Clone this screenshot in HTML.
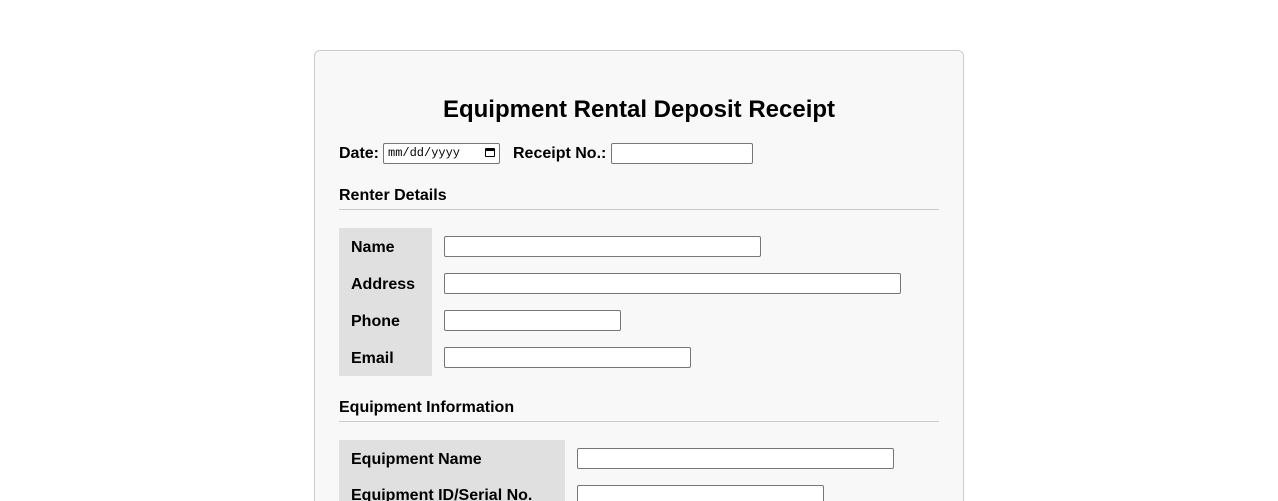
<!DOCTYPE html>
<html style="height:501px;overflow:hidden"><head><style>
body{margin:0;background:#fff;font-family:"Liberation Sans",Arial,sans-serif;width:1278px;height:501px;overflow:hidden;position:relative}
.card{position:absolute;left:314px;top:50px;width:648px;height:480px;border:1px solid #ccc;border-radius:6px;background:#f8f8f8}
.a{position:absolute;font-weight:bold;color:#000;white-space:nowrap}
.in{position:absolute;height:19px;border:1px solid #767676;border-radius:2px;background:#fff}
.lab{position:absolute;background:#e0e0e0}
.line{position:absolute;left:339px;width:600px;height:1px;background:#ccc}
</style></head><body>
<div class="card"></div>
<div class="a" style="left:339px;width:600px;text-align:center;top:96px;font-size:24px">Equipment Rental Deposit Receipt</div>
<div class="a" style="left:339px;top:145px;font-size:16px">Date:</div>
<div class="in" style="left:383px;top:143px;width:115px;font:12px 'Liberation Mono',monospace;font-weight:normal;line-height:19px"><span style="position:absolute;left:4px">mm/dd/yyyy</span><span style="position:absolute;right:4px;top:4px;width:10px;height:9px;border:1.5px solid #000;border-top-width:3px;border-radius:1px;box-sizing:border-box"></span></div>
<div class="a" style="left:513px;top:145px;font-size:16px">Receipt No.:</div>
<div class="in" style="left:611px;top:143px;width:140px"></div>
<div class="a" style="left:339px;top:187px;font-size:16px">Renter Details</div>
<div class="line" style="top:209px"></div>
<div class="lab" style="left:339px;top:228px;width:93px;height:148px"></div>
<div class="a" style="left:351px;top:239px;font-size:16px">Name</div>
<div class="a" style="left:351px;top:276px;font-size:16px">Address</div>
<div class="a" style="left:351px;top:313px;font-size:16px">Phone</div>
<div class="a" style="left:351px;top:350px;font-size:16px">Email</div>
<div class="in" style="left:444px;top:236px;width:315px"></div>
<div class="in" style="left:444px;top:273px;width:455px"></div>
<div class="in" style="left:444px;top:310px;width:175px"></div>
<div class="in" style="left:444px;top:347px;width:245px"></div>
<div class="a" style="left:339px;top:399px;font-size:16px">Equipment Information</div>
<div class="line" style="top:421px"></div>
<div class="lab" style="left:339px;top:440px;width:226px;height:70px"></div>
<div class="a" style="left:351px;top:451px;font-size:16px">Equipment Name</div>
<div class="a" style="left:351px;top:487px;font-size:16px">Equipment ID/Serial No.</div>
<div class="in" style="left:577px;top:448px;width:315px"></div>
<div class="in" style="left:577px;top:485px;width:245px"></div>
</body></html>
